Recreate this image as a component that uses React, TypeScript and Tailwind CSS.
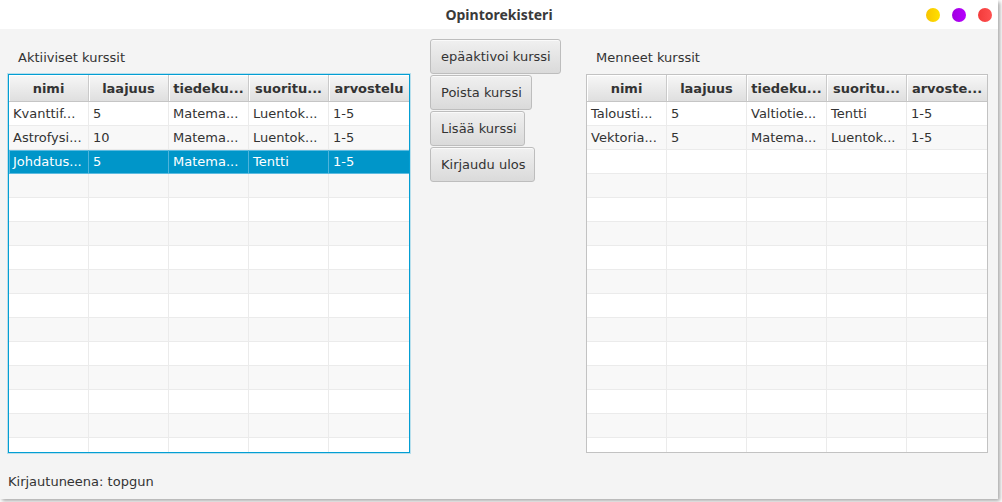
import React from "react";

type Row = string[];

const leftRows: Row[] = [
  ["Kvanttif...", "5", "Matema...", "Luentok...", "1-5"],
  ["Astrofysi...", "10", "Matema...", "Luentok...", "1-5"],
  ["Johdatus...", "5", "Matema...", "Tentti", "1-5"],
];

const rightRows: Row[] = [
  ["Talousti...", "5", "Valtiotie...", "Tentti", "1-5"],
  ["Vektoria...", "5", "Matema...", "Luentok...", "1-5"],
];

function Table({
  headers,
  rows,
  selected,
  focused,
}: {
  headers: string[];
  rows: Row[];
  selected?: number;
  focused?: boolean;
}) {
  const total = 15;
  const all: (Row | null)[] = [];
  for (let i = 0; i < total; i++) all.push(rows[i] ?? null);
  return (
    <div
      className={
        "h-[379px] w-[402px] overflow-hidden border bg-white " +
        (focused
          ? "border-[#039ed3] shadow-[0_0_0_1px_rgba(3,158,211,0.25)]"
          : "border-[#c2c2c2]")
      }
    >
      <div className="grid h-[27px] grid-cols-[80px_80px_80px_80px_80px] border-b border-[#c5c5c5]">
        {headers.map((h, i) => (
          <div
            key={i}
            className="flex items-center justify-center border-r border-[#cacaca] bg-linear-to-b from-[#f7f7f7] to-[#dfdfdf] pt-[2px] text-[13px] font-bold text-[#333] shadow-[inset_1px_1px_0_#ffffff] last:border-r-0"
          >
            {h}
          </div>
        ))}
      </div>
      {all.map((r, i) => {
        const sel = i === selected;
        const bg = sel ? "bg-[#0096c9]" : i % 2 === 1 ? "bg-[#f8f8f8]" : "bg-white";
        return (
          <div
            key={i}
            className={
              "grid h-[24px] grid-cols-[80px_80px_80px_80px_80px] border-b " +
              bg +
              (sel
                ? " border-[#5cbbe0] shadow-[inset_0_1px_0_#5cbbe0]"
                : " border-[#ebebeb]")
            }
          >
            {[0, 1, 2, 3, 4].map((c) => (
              <div
                key={c}
                className={
                  "flex items-center overflow-hidden whitespace-nowrap border-r pl-[4px] text-[13px] last:border-r-0 " +
                  (sel
                    ? "border-[#4fb3db] text-white"
                    : "border-[#ebebeb] text-[#333]") +
                  (sel && c === 0 ? " shadow-[inset_1px_0_0_#5cbbe0]" : "")
                }
              >
                {r ? r[c] : ""}
              </div>
            ))}
          </div>
        );
      })}
    </div>
  );
}

function Btn({ label, w }: { label: string; w: string }) {
  return (
    <button
      className={
        "h-[35px] rounded-[3px] border border-[#bdbdbd] bg-linear-to-b from-[#f0f0f0] to-[#dadada] pl-[10px] text-left text-[13px] text-[#333] shadow-[inset_0_1px_0_#fafafa] " +
        w
      }
    >
      {label}
    </button>
  );
}

export default function App() {
  return (
    <div className="h-[502px] w-[1002px] overflow-hidden bg-white font-['DejaVu_Sans',sans-serif]">
      <div className="flex h-[499px] w-[998px] flex-col shadow-[2px_2px_4px_rgba(0,0,0,0.35)]">
        <div className="grid h-[29px] grid-cols-[1fr_auto_1fr] items-center bg-white">
          <div />
          <div className="pb-[1px] font-['Noto_Sans',sans-serif] text-[14px] font-bold text-[#3a3a3a]">
            Opintorekisteri
          </div>
          <div className="flex items-center justify-end gap-[12px] pr-[6px]">
            <span className="h-[14px] w-[14px] rounded-full bg-linear-to-r from-[#f7c400] to-[#ffe000]" />
            <span className="h-[14px] w-[14px] rounded-full bg-linear-to-r from-[#a000e0] to-[#b800ff]" />
            <span className="h-[14px] w-[14px] rounded-full bg-linear-to-r from-[#f33a3a] to-[#ff5050]" />
          </div>
        </div>
        <div className="flex flex-1 flex-col bg-[#f4f4f4]">
          <div className="flex">
            <div className="ml-[8px] flex w-[402px] flex-col pt-[20px]">
              <div className="mb-[8px] h-[17px] pl-[10px] text-[13px] leading-[17px] text-[#333]">
                Aktiiviset kurssit
              </div>
              <Table
                headers={["nimi", "laajuus", "tiedeku...", "suoritu...", "arvostelu"]}
                rows={leftRows}
                selected={2}
                focused
              />
            </div>
            <div className="ml-[20px] flex w-[131px] flex-col gap-[1px] pt-[10px]">
              <Btn label="epäaktivoi kurssi" w="w-[131px]" />
              <Btn label="Poista kurssi" w="w-[102px]" />
              <Btn label="Lisää kurssi" w="w-[95px]" />
              <Btn label="Kirjaudu ulos" w="w-[105px]" />
            </div>
            <div className="ml-[25px] flex w-[402px] flex-col pt-[20px]">
              <div className="mb-[8px] h-[17px] pl-[10px] text-[13px] leading-[17px] text-[#333]">
                Menneet kurssit
              </div>
              <Table
                headers={["nimi", "laajuus", "tiedeku...", "suoritu...", "arvoste..."]}
                rows={rightRows}
              />
            </div>
          </div>
          <div className="mt-[20px] h-[17px] pl-[8px] text-[13px] leading-[17px] text-[#333]">
            Kirjautuneena: topgun
          </div>
        </div>
      </div>
    </div>
  );
}
